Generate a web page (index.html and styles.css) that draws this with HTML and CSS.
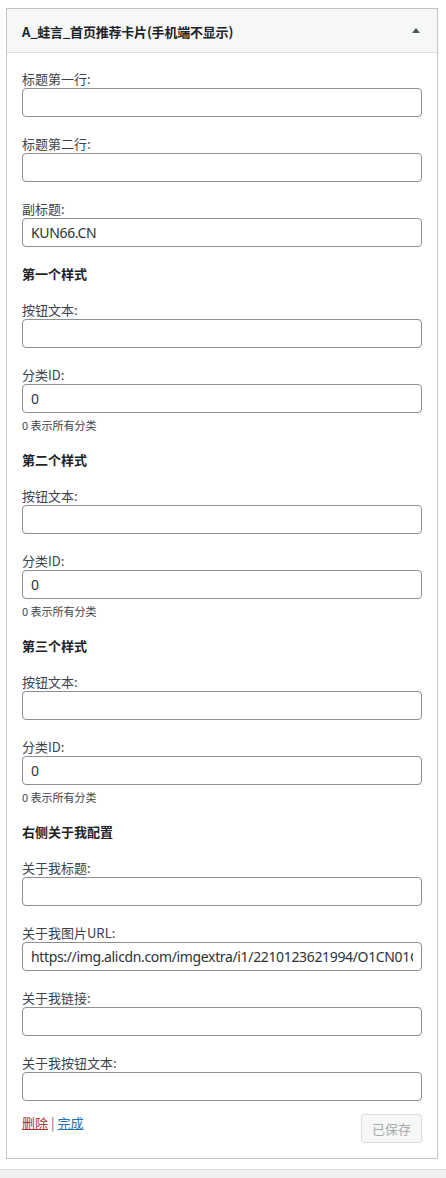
FILE: index.html
```html
<!DOCTYPE html>
<html lang="zh-CN">
<head>
<meta charset="utf-8">
<title>A_蛙言_首页推荐卡片</title>
<link rel="stylesheet" href="styles.css">
</head>
<body>
<div class="widget">
  <div class="widget-top">
    <h3 class="widget-title">A_蛙言_首页推荐卡片(手机端不显示)</h3>
    <span class="toggle" aria-hidden="true"></span>
  </div>
  <div class="widget-inside">
    <div class="field"><label>标题第一行:</label><input class="widefat" type="text" value=""></div>
    <div class="field"><label>标题第二行:</label><input class="widefat" type="text" value=""></div>
    <div class="field"><label>副标题:</label><input class="widefat" type="text" value="KUN66.CN"></div>

    <h4 class="section">第一个样式</h4>
    <div class="field"><label>按钮文本:</label><input class="widefat" type="text" value=""></div>
    <div class="field"><label>分类ID:</label><input class="widefat" type="text" value="0"><small class="hint">0 表示所有分类</small></div>

    <h4 class="section">第二个样式</h4>
    <div class="field"><label>按钮文本:</label><input class="widefat" type="text" value=""></div>
    <div class="field"><label>分类ID:</label><input class="widefat" type="text" value="0"><small class="hint">0 表示所有分类</small></div>

    <h4 class="section">第三个样式</h4>
    <div class="field"><label>按钮文本:</label><input class="widefat" type="text" value=""></div>
    <div class="field"><label>分类ID:</label><input class="widefat" type="text" value="0"><small class="hint">0 表示所有分类</small></div>

    <h4 class="section">右侧关于我配置</h4>
    <div class="field"><label>关于我标题:</label><input class="widefat" type="text" value=""></div>
    <div class="field"><label>关于我图片URL:</label><input class="widefat" type="text" value="https://img.alicdn.com/imgextra/i1/2210123621994/O1CN01CqzWbX1Y2gHvNp8fL_!!2210123621994.png"></div>
    <div class="field"><label>关于我链接:</label><input class="widefat" type="text" value=""></div>
    <div class="field"><label>关于我按钮文本:</label><input class="widefat" type="text" value=""></div>

    <div class="actions">
      <div class="links"><a class="delete" href="#">删除</a><span class="sep">|</span><a class="done" href="#">完成</a></div>
      <button class="save" type="button" disabled>已保存</button>
    </div>
  </div>
</div>
<div class="footer-bar"></div>
</body>
</html>
```

FILE: styles.css
```css
html, body {
  margin: 0;
  padding: 0;
  background: #fff;
}

body {
  font-family: "Noto Sans CJK SC", "Noto Sans", sans-serif;
  font-size: 13px;
  color: #3c434a;
}

.widget {
  margin: 8px 8px 0 6px;
  border: 1px solid #c3c4c7;
  background: #fff;
}

.widget-top {
  height: 43px;
  background: #f6f7f7;
  border-bottom: 1px solid #dcdcde;
  display: flex;
  align-items: center;
  justify-content: space-between;
  padding: 0 17px 0 15px;
}

.widget-title {
  margin: 0;
  font-size: 13px;
  font-weight: 700;
  color: #1d2327;
  line-height: 18px;
  padding-top: 2px;
  letter-spacing: -0.2px;
}

.toggle {
  width: 0;
  height: 0;
  border-left: 4px solid transparent;
  border-right: 4px solid transparent;
  border-bottom: 5px solid #50575e;
}

.widget-inside {
  display: flex;
  flex-direction: column;
  gap: 18px;
  padding: 17px 15px 15px;
}

.field {
  display: flex;
  flex-direction: column;
}

.field label {
  line-height: 18px;
  color: #3c434a;
}

.widefat {
  box-sizing: border-box;
  width: 100%;
  height: 29px;
  margin: 0;
  padding: 0 8px;
  border: 1px solid #8c8f94;
  border-radius: 4px;
  background: #fff;
  font-family: "Noto Sans", "Noto Sans CJK SC", sans-serif;
  font-size: 14px;
  letter-spacing: -0.35px;
  color: #2c3338;
  outline: none;
}

.hint {
  margin-top: 5px;
  font-size: 11px;
  line-height: 15px;
  color: #3c434a;
}

.section {
  margin: 0;
  font-size: 13px;
  font-weight: 700;
  line-height: 18px;
  color: #1d2327;
}

.actions {
  margin-top: -5px;
  display: flex;
  justify-content: space-between;
  align-items: flex-start;
}

.links {
  line-height: 18px;
  display: flex;
  gap: 3px;
}

.links a {
  text-decoration: underline;
}

.delete {
  color: #b32d2e;
}

.done {
  color: #2271b1;
}

.sep {
  color: #646970;
}

.save {
  box-sizing: border-box;
  height: 29px;
  padding: 0 10px;
  border: 1px solid #dcdcde;
  border-radius: 3px;
  background: #f6f7f7;
  color: #a7aaad;
  font-family: "Noto Sans CJK SC", sans-serif;
  font-size: 13px;
  line-height: 27px;
}

.footer-bar {
  margin-top: 10px;
  height: 8px;
  border-top: 1px solid #dcdcde;
  background: #f0f0f1;
}
```
